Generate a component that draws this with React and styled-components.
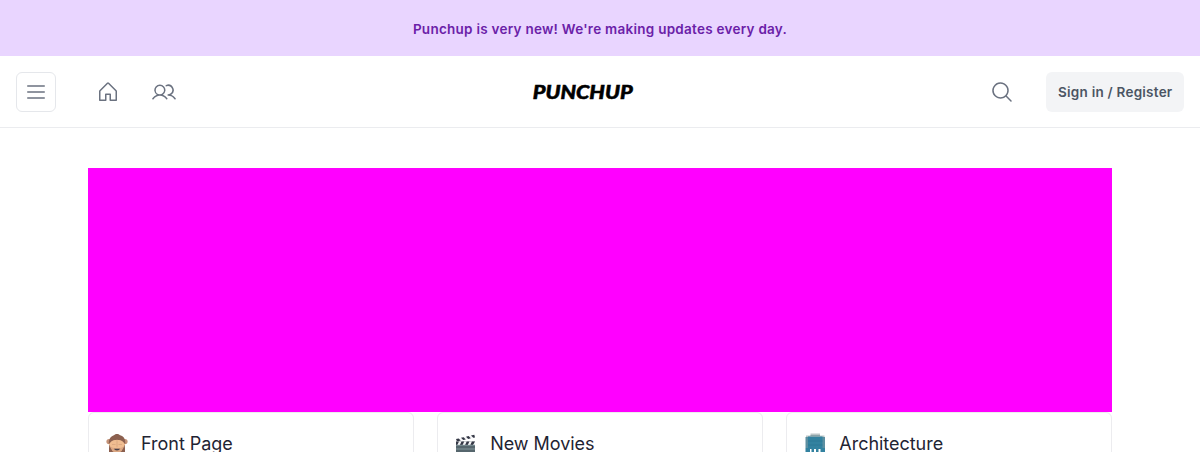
import React from "react";
import styled, { createGlobalStyle } from "styled-components";
import { PiHouse, PiUsers, PiMagnifyingGlass, PiList } from "react-icons/pi";

const GlobalStyle = createGlobalStyle`
  * { box-sizing: border-box; }
  body { margin: 0; background: #fff; font-family: Inter, sans-serif; overflow: hidden; }
`;

const Page = styled.div`
  height: 452px;
  overflow: hidden;
`;

const Banner = styled.div`
  height: 56px;
  padding-top: 3px;
  display: flex;
  align-items: center;
  justify-content: center;
  background: #e9d5ff;
  color: #6b21a8;
  font-size: 13.5px;
  font-weight: 600;
  line-height: 17px;
  letter-spacing: 0.26px;
`;

const Header = styled.header`
  height: 72px;
  padding: 0 16px;
  display: grid;
  grid-template-columns: 1fr auto 1fr;
  align-items: center;
  border-bottom: 1px solid #ebecef;
`;

const Group = styled.div`
  display: flex;
  align-items: center;
  color: #6b7280;
  justify-content: ${(p) => (p.$end ? "flex-end" : "flex-start")};
`;

const MenuButton = styled.button`
  width: 40px;
  height: 40px;
  padding: 0;
  margin-right: 40px;
  display: flex;
  align-items: center;
  justify-content: center;
  border: 1px solid #e5e7eb;
  border-radius: 6px;
  background: #fff;
  color: #6b7280;
`;

const NavLink = styled.a`
  display: flex;
  margin-right: ${(p) => p.$gap || 0}px;
`;

const Logo = styled.div`
  font-family: Lato, sans-serif;
  font-size: 18px;
  font-weight: 900;
  font-style: italic;
  line-height: 24px;
  color: #000;
  margin-right: 35px;
  -webkit-text-stroke: 0.5px #000;
  transform: scaleX(1.2);
`;

const SignIn = styled.button`
  height: 40px;
  width: 138.5px;
  padding: 0 0 0 1px;
  border: 0;
  border-radius: 6px;
  background: #f3f4f6;
  color: #4b5563;
  font: 600 13.5px Inter, sans-serif;
  letter-spacing: 0.24px;
`;

const Main = styled.main`
  width: 1024px;
  margin: 40px auto 0;
`;

const Hero = styled.div`
  height: 244px;
  background: #f0f;
`;

const Cards = styled.div`
  display: grid;
  grid-template-columns: repeat(3, 1fr);
  gap: 23.5px;
`;

const Card = styled.section`
  height: 160px;
  padding: 17px 17px 0;
  display: flex;
  align-items: flex-start;
  border: 1px solid #ececef;
  border-radius: 6px;
`;

const TopicIcon = styled.svg`
  width: 22px;
  height: 22px;
  margin: 3px 13px 0 0;
  flex: none;
`;

const Title = styled.h2`
  margin: 0;
  font-size: 18px;
  font-weight: 400;
  line-height: 28px;
  letter-spacing: -0.03px;
  color: #1f2433;
`;

function Monkey() {
  return (
    <TopicIcon viewBox="0 0 22 22">
      <circle cx="3" cy="8.5" r="2.6" fill="#c49378" />
      <circle cx="19" cy="8.5" r="2.6" fill="#c49378" />
      <path d="M3 12C2 4.5 6 3 8 2.2C9.5.6 12.5.6 14 2.2C17 3 20 5 19 12L18 21H4Z" fill="#8b604f" />
      <ellipse cx="11" cy="13.2" rx="7" ry="6.5" fill="#dba783" />
      <path d="M2.8 11.5Q6 6.5 11 7.2Q16 6.5 19.2 11.5Q17 15.8 11 14.8Q5 15.8 2.8 11.5Z" fill="#f0bd91" />
      <path d="M11 7.5V14M6 11.5H9.5M12.5 11.5H16" stroke="#d19d78" strokeWidth=".6" />
      <path d="M8 15.8H14Q13.5 17.5 11 17.5Q8.5 17.5 8 15.8Z" fill="#49414a" />
      <path d="M3 14Q6 15 7 22H3ZM19 14Q16 15 15 22H19Z" fill="#8b604f" />
    </TopicIcon>
  );
}

function Clapper() {
  return (
    <TopicIcon viewBox="0 0 22 22">
      <path d="M1 6L19.3 1.8L20 4.4L2 8.5Z" fill="#f5f5f7" />
      <path d="M1 6L3.6 5.4L5.8 7.6L2 8.5ZM6 4.8L8.6 4.2L10.8 6.5L8.2 7.1ZM11 3.7L13.6 3.1L15.8 5.3L13.2 5.9ZM16 2.6L19.3 1.8L20 4.4L18.3 4.8Z" fill="#343745" />
      <path d="M1 8.5H20V22H1Z" fill="#56666d" />
      <path d="M1 8.5H20V12H1Z" fill="#f5f5f7" />
      <path d="M1 8.5H4L2.3 12H1ZM6.5 8.5H9.2L7.6 12H4.9ZM11.7 8.5H14.4L12.8 12H10.1ZM16.9 8.5H20L18 12H15.3Z" fill="#343745" />
      <path d="M1 12.2H20M1 16H20" stroke="#8fa5a8" strokeWidth=".8" />
    </TopicIcon>
  );
}

function Building() {
  return (
    <TopicIcon viewBox="0 0 22 22">
      <path d="M6.5 .5H16V3H6.5ZM2 2.5H20.5V5H2Z" fill="#bcc5c7" />
      <path d="M1.5 4H21V15H1.5Z" fill="#5c8fa1" />
      <path d="M4 3.5H18.5V16H4Z" fill="#3382a0" />
      <path d="M6.5 2H16V3.5H6.5Z" fill="#8aa3a9" />
      <path d="M4 8H18.5M4 12H18.5" stroke="#2a7490" strokeWidth=".6" />
      <path d="M1.5 15H6V22H1.5ZM7.5 15H10V22H7.5ZM12 15H14.5V22H12ZM16.5 15H21V22H16.5Z" fill="#3382a0" />
    </TopicIcon>
  );
}

const topics = [
  [Monkey, "Front Page"],
  [Clapper, "New Movies"],
  [Building, "Architecture"],
];

export default function App() {
  return (
    <Page>
      <GlobalStyle />
      <Banner>Punchup is very new! We're making updates every day.</Banner>
      <Header>
        <Group>
          <MenuButton aria-label="Menu"><PiList size={24} /></MenuButton>
          <NavLink $gap={32}><PiHouse size={24} /></NavLink>
          <NavLink><PiUsers size={24} /></NavLink>
        </Group>
        <Logo>PUNCHUP</Logo>
        <Group $end>
          <NavLink $gap={32}><PiMagnifyingGlass size={24} /></NavLink>
          <SignIn>Sign in / Register</SignIn>
        </Group>
      </Header>
      <Main>
        <Hero />
        <Cards>
          {topics.map(([Icon, name]) => (
            <Card key={name}>
              <Icon />
              <Title>{name}</Title>
            </Card>
          ))}
        </Cards>
      </Main>
    </Page>
  );
}
